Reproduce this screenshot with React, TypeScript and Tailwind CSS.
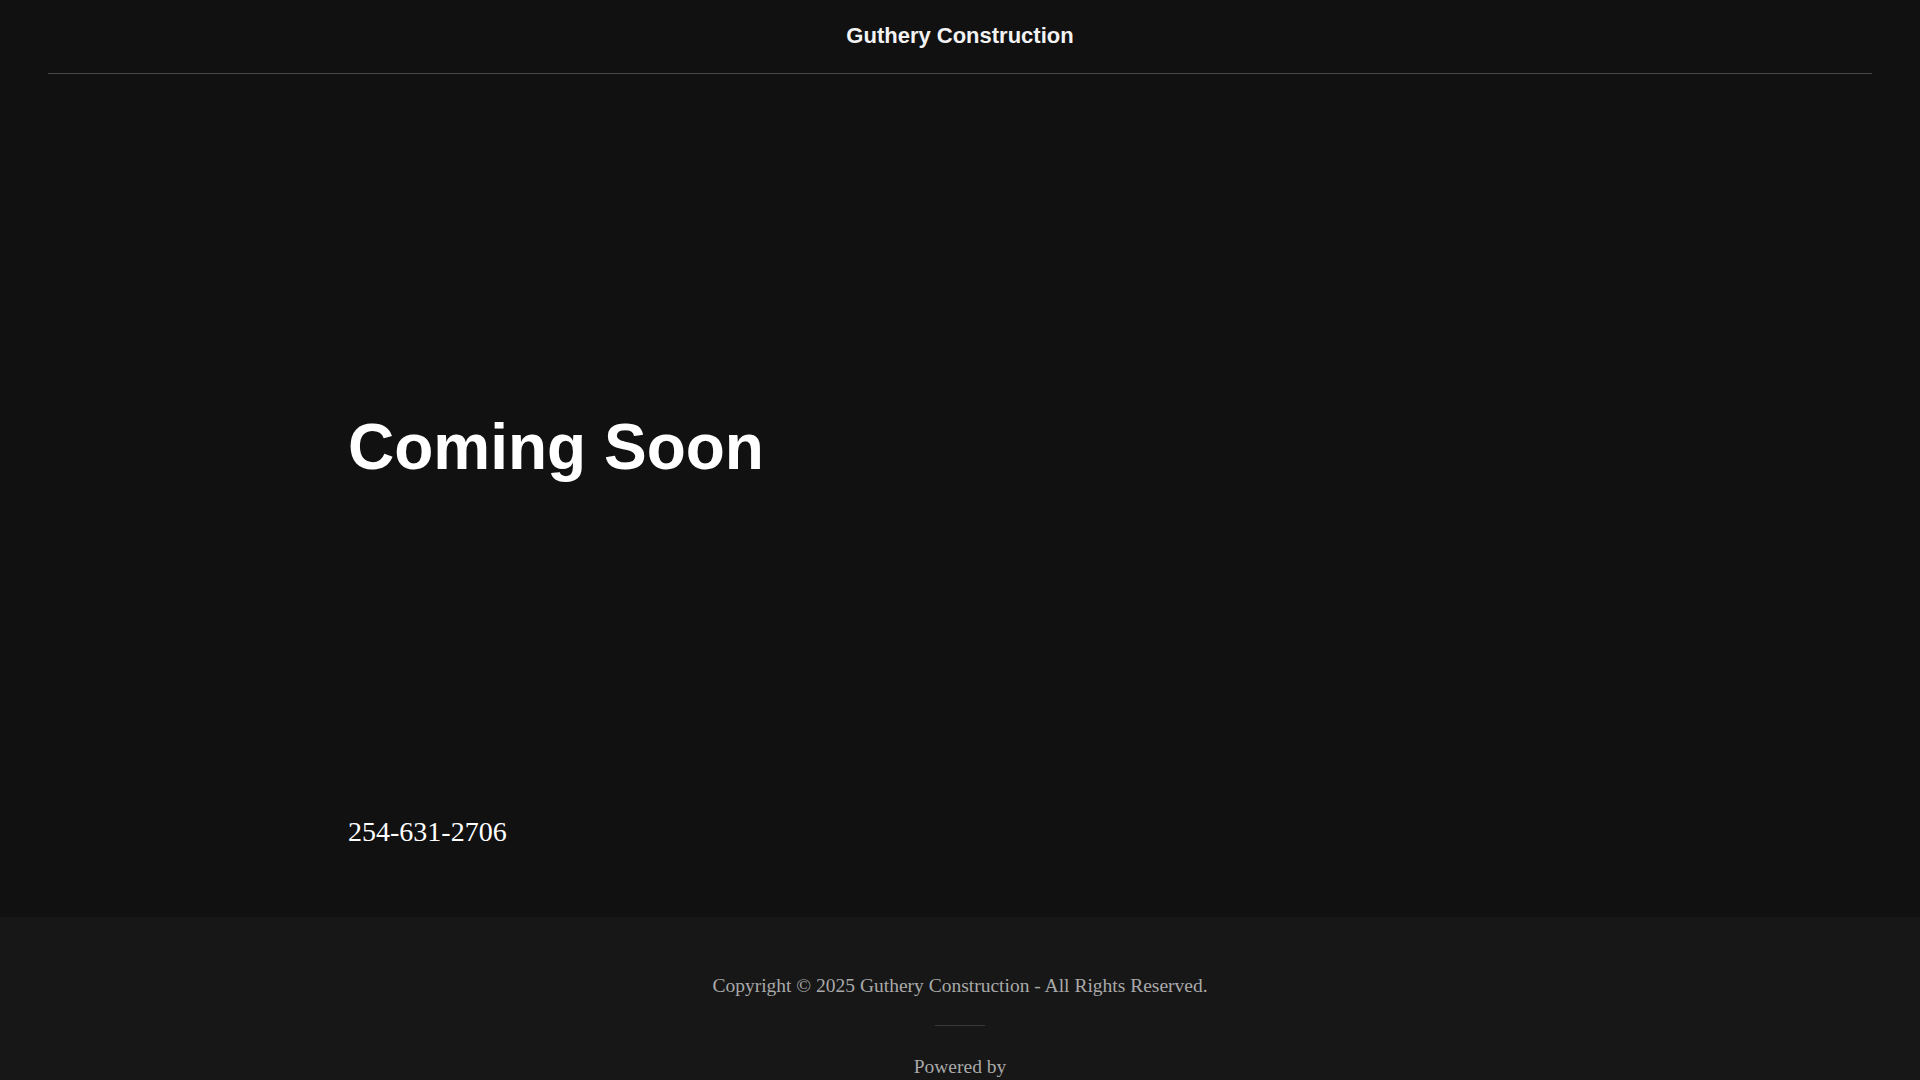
export default function App() {
  return (
    <div className="min-h-screen bg-[#171717] font-[family-name:Liberation_Sans,Arial,sans-serif]">
      {/* Hero */}
      <div className="h-[917px] bg-[#111111] flex flex-col">
        <header className="mx-[48px] h-[74px] border-b border-[#4a4a4a] flex items-center justify-center">
          <span className="text-[22px] font-bold text-[#f3f3f3] leading-none -mt-[1px]">Guthery Construction</span>
        </header>
        <div className="pl-[348px] flex flex-col">
          <h1 className="mt-[333px] text-[64px] font-bold text-white leading-[80px]">Coming Soon</h1>
          <p className="mt-[328px] text-[28px] text-white leading-[34px] font-[family-name:Liberation_Serif,Times_New_Roman,serif]">254-631-2706</p>
        </div>
      </div>
      {/* Footer */}
      <footer className="bg-[#171717] flex flex-col items-center pb-[60px] font-[family-name:Liberation_Serif,Times_New_Roman,serif] text-[#a9a9a9]">
        <p className="mt-[56px] text-[19.5px] leading-[26px]">Copyright © 2025 Guthery Construction - All Rights Reserved.</p>
        <div className="mt-[26px] w-[50px] h-px bg-[#3a3a3a]"></div>
        <p className="mt-[28px] text-[19.5px] leading-[26px]">Powered by</p>
      </footer>
    </div>
  )
}
